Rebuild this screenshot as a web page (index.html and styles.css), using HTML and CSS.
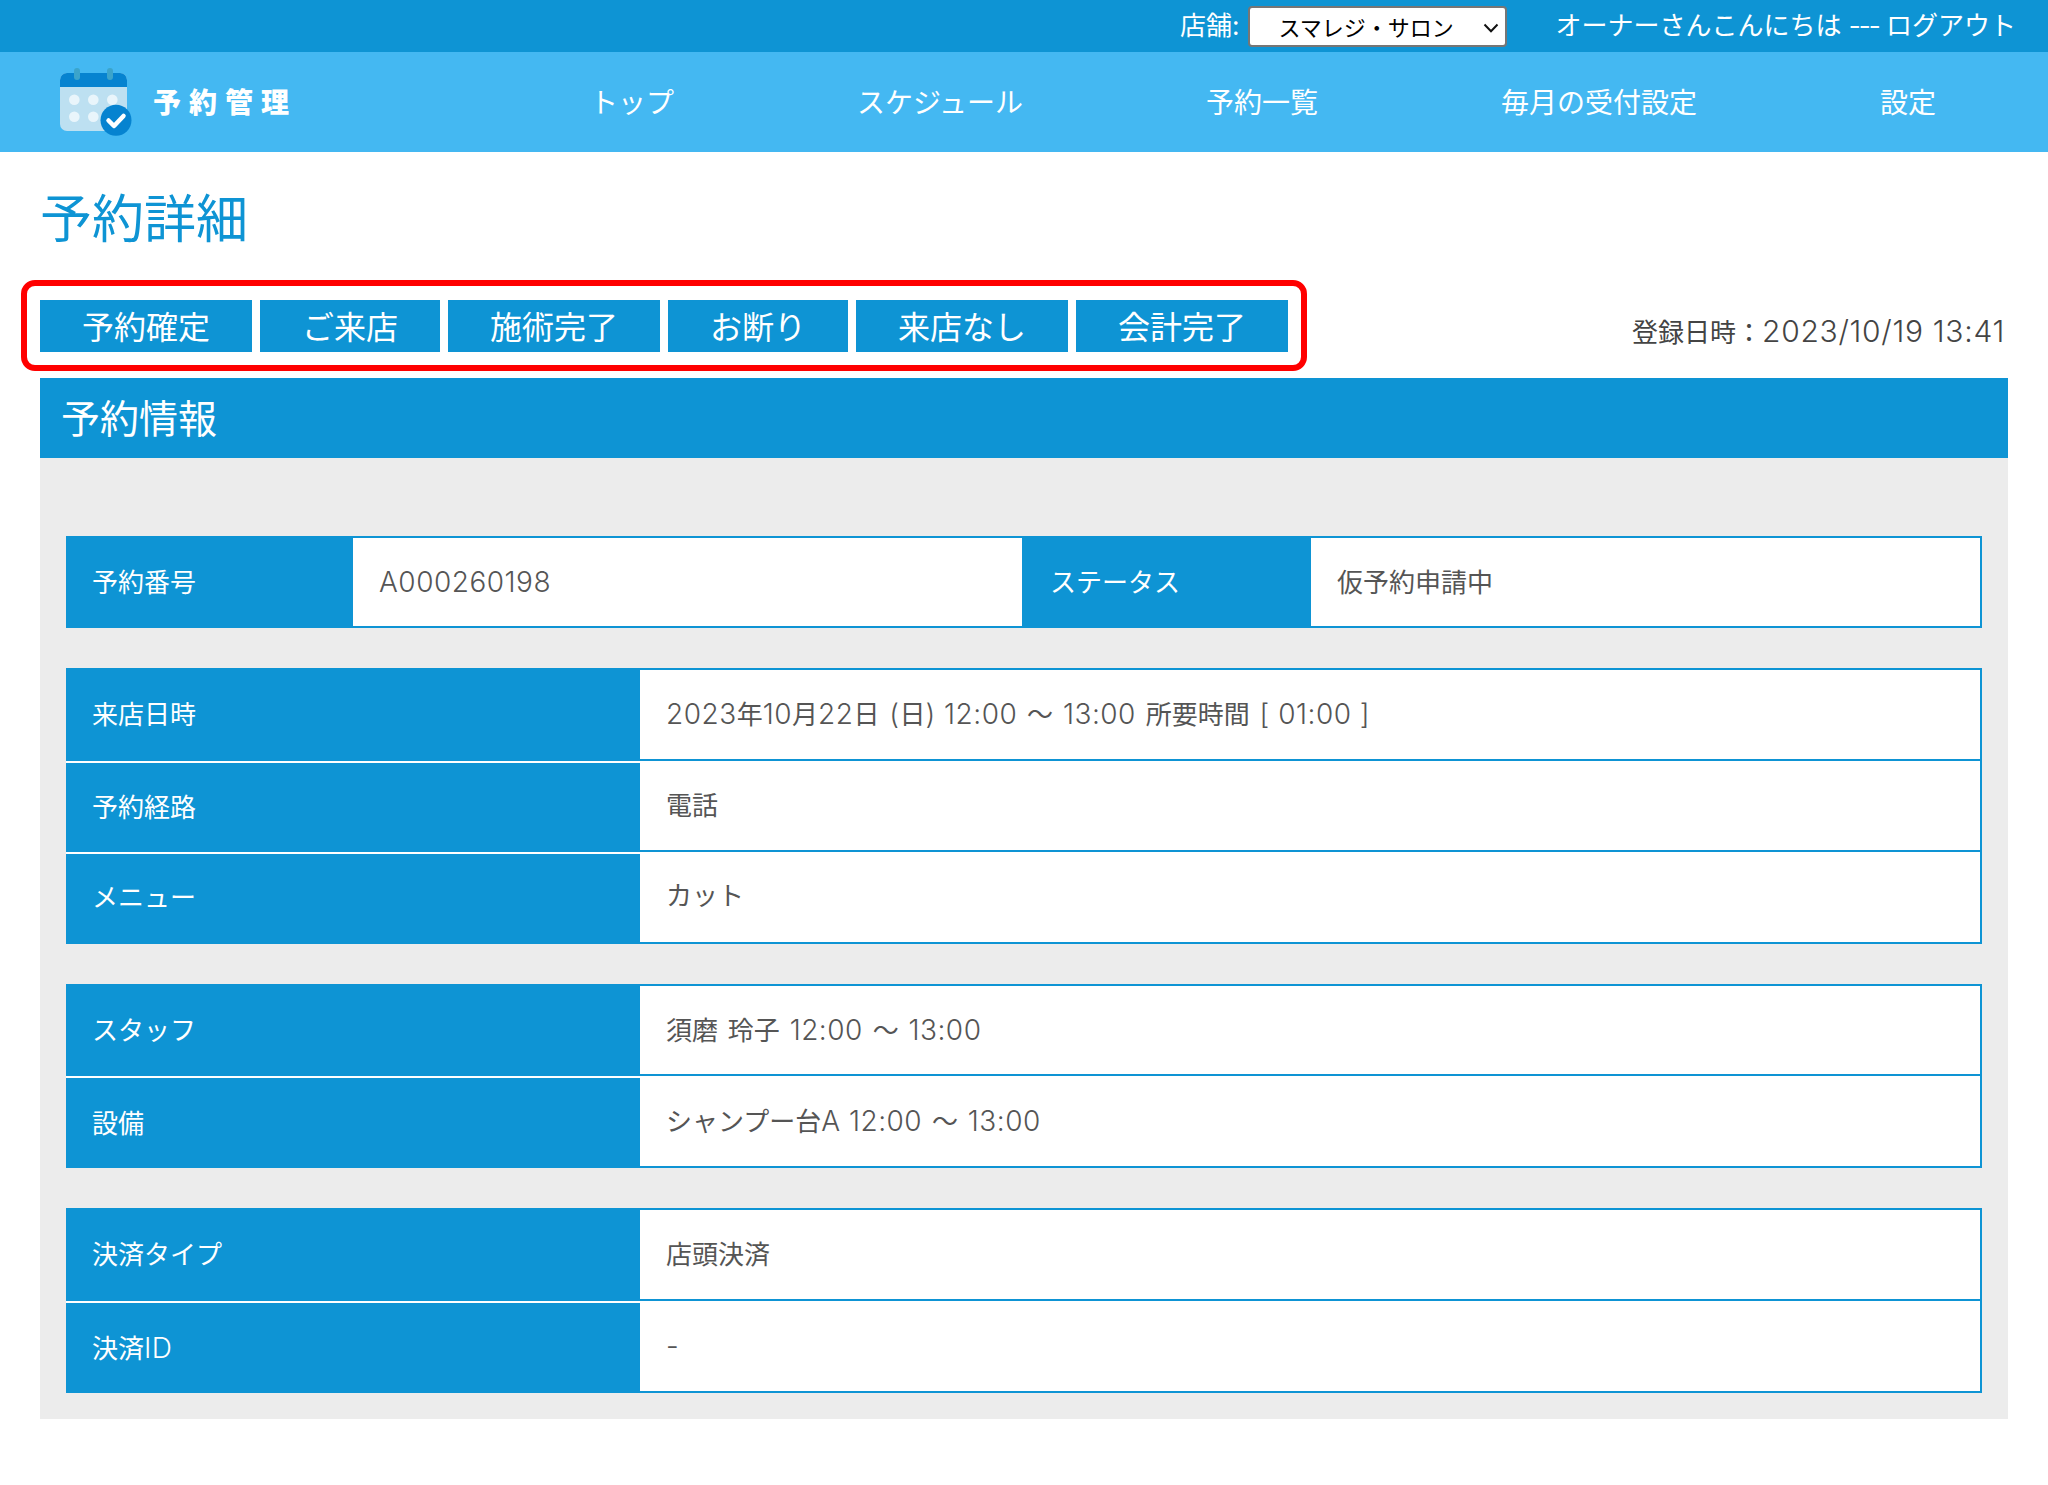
FILE: index.html
```html
<!DOCTYPE html>
<html lang="ja">
<head>
<meta charset="utf-8">
<title>予約詳細</title>
<link rel="stylesheet" href="styles.css">
</head>
<body>
<header class="topbar">
  <label class="store-label">店舗:</label>
  <div class="store-select">
    <select class="store-input"><option>スマレジ・サロン</option></select>
    <svg class="store-chevron" viewBox="0 0 16 10" width="16" height="10"><path d="M1.500 1.500 8 8.200l6.500-6.700" fill="none" stroke="#111" stroke-width="2"/></svg>
  </div>
  <span class="greeting">オーナーさんこんにちは <span class="dash">---</span> ログアウト</span>
</header>
<nav class="nav">
  <div class="logo">
    <svg class="logo-icon" viewBox="0 0 72 68" width="72" height="68">
      <rect x="0" y="5" width="67" height="58" rx="7" fill="#bde0f1"/>
      <path d="M0 19V12a7 7 0 0 1 7-7h53a7 7 0 0 1 7 7v7z" fill="#0683d0"/>
      <rect x="14" y="0" width="6" height="12" rx="3" fill="#3ba4cb"/>
      <rect x="47" y="0" width="6" height="12" rx="3" fill="#3ba4cb"/>
      <g fill="#e9f5fb">
        <circle cx="14.300" cy="31.700" r="5.300"/><circle cx="33.300" cy="31.700" r="5.300"/><circle cx="52.300" cy="31.700" r="5.300"/>
        <circle cx="14.300" cy="48.700" r="5.300"/><circle cx="33.300" cy="48.700" r="5.300"/>
      </g>
      <circle cx="56" cy="52.300" r="15.500" fill="#0683d0"/>
      <path d="M48.500 52.500l5.500 5.500 9.500-10" fill="none" stroke="#fff" stroke-width="4.500" stroke-linecap="round" stroke-linejoin="round"/>
    </svg>
    <span class="logo-text">予約管理</span>
  </div>
  <ul class="nav-list">
    <li>トップ</li>
    <li>スケジュール</li>
    <li>予約一覧</li>
    <li>毎月の受付設定</li>
    <li>設定</li>
  </ul>
</nav>
<main class="page">
  <h1 class="page-title">予約詳細</h1>
  <div class="actions">
    <div class="buttons">
      <button class="btn btn-wide">予約確定</button>
      <button class="btn">ご来店</button>
      <button class="btn btn-wide">施術完了</button>
      <button class="btn">お断り</button>
      <button class="btn btn-wide">来店なし</button>
      <button class="btn btn-wide">会計完了</button>
      <div class="highlight"></div>
    </div>
    <div class="registered">登録日時：<span class="num-large">2023/10/19 13:41</span></div>
  </div>
  <section class="panel">
    <h2 class="panel-title">予約情報</h2>
    <div class="panel-body">
      <table class="info four">
        <tr><th>予約番号</th><td class="solo"><span class="num">A000260198</span></td><th>ステータス</th><td>仮予約申請中</td></tr>
      </table>
      <table class="info two">
        <tr class="row-tall"><th>来店日時</th><td><span class="num">2023</span>年<span class="num">10</span>月<span class="num">22</span>日 <span class="num">(</span>日<span class="num">) 12:00</span> 〜 <span class="num">13:00</span> 所要時間 <span class="num">[ 01:00 ]</span></td></tr>
        <tr class="row-short"><th>予約経路</th><td>電話</td></tr>
        <tr class="row-lift"><th>メニュー</th><td>カット</td></tr>
      </table>
      <table class="info two">
        <tr><th>スタッフ</th><td>須磨 玲子 <span class="num">12:00</span> 〜 <span class="num">13:00</span></td></tr>
        <tr><th>設備</th><td>シャンプー台<span class="num">A 12:00</span> 〜 <span class="num">13:00</span></td></tr>
      </table>
      <table class="info two">
        <tr class="row-tall"><th>決済タイプ</th><td>店頭決済</td></tr>
        <tr><th>決済<span class="num">ID</span></th><td class="solo"><span class="num">-</span></td></tr>
      </table>
    </div>
  </section>
</main>
</body>
</html>
```

FILE: styles.css
```css
* { box-sizing: border-box; }
html, body { margin: 0; padding: 0; }
body {
  background: #fff;
  color: #555;
  font-family: Inter, "Noto Sans CJK JP", sans-serif;
  font-size: 26px;
  height: 1485px;
  overflow: hidden;
}
.num { font-size: 28px; font-weight: 300; letter-spacing: 0.5px; word-spacing: 0; }
.num-large { font-size: 30px; font-weight: 300; letter-spacing: 0.7px; }
.topbar {
  height: 52px;
  background: #0e94d4;
  color: #fff;
  display: flex;
  align-items: center;
  justify-content: flex-end;
  padding-right: 32px;
}
.store-label { margin-right: 9px; margin-bottom: 5px; }
.store-select { position: relative; width: 259px; height: 41px; margin-right: 48px; }
.store-input {
  appearance: none;
  width: 100%;
  height: 100%;
  background: #fff;
  border: 2px solid #767676;
  border-radius: 4px;
  padding: 0 0 0 28px;
  font-family: "Noto Sans CJK JP", sans-serif;
  font-size: 22px;
  color: #000;
}
.store-chevron { position: absolute; right: 8px; top: 17px; }
.greeting { margin-bottom: 5px; }
.dash { letter-spacing: -2px; }
.nav {
  height: 100px;
  background: #44b8f2;
  color: #fff;
  display: flex;
  align-items: center;
  padding: 0 112px 0 60px;
}
.logo { display: flex; align-items: center; }
.logo-icon { display: block; }
.logo-text {
  margin-left: 21px;
  margin-bottom: 2px;
  font-size: 28px;
  font-weight: 900;
  letter-spacing: 8px;
}
.nav-list {
  display: flex;
  gap: 183px;
  list-style: none;
  margin: 0 0 2px auto;
  padding: 0;
  font-size: 28px;
}
.page { padding: 0 40px; }
.page-title {
  margin: 0;
  padding-top: 32px;
  height: 148px;
  color: #0e94d4;
  font-size: 52px;
  font-weight: 400;
  line-height: 72px;
}
.actions { display: flex; justify-content: space-between; align-items: flex-start; }
.buttons { position: relative; display: flex; gap: 8px; }
.btn {
  width: 180px;
  height: 52px;
  border: 0;
  padding: 0 0 2px;
  background: #0e94d4;
  color: #fff;
  font-family: "Noto Sans CJK JP", sans-serif;
  font-size: 32px;
  line-height: 50px;
}
.btn-wide { width: 212px; }
.highlight {
  position: absolute;
  left: -19px;
  top: -20px;
  width: 1286px;
  height: 91px;
  border: 6px solid #f00;
  border-radius: 14px;
  pointer-events: none;
}
.registered { margin-top: 13px; padding-right: 3px; color: #444; line-height: 36px; }
.panel { margin-top: 26px; background: #ececec; }
.panel-title {
  margin: 0;
  height: 80px;
  padding: 1px 0 0 21px;
  background: #0e94d4;
  color: #fff;
  font-size: 39px;
  font-weight: 400;
  line-height: 80px;
}
.panel-body { padding: 78px 26px 26px; display: flex; flex-direction: column; gap: 40px; }
.info {
  width: 100%;
  table-layout: fixed;
  border-collapse: separate;
  border-spacing: 0;
  background: #fff;
}
.info th, .info td { height: 92px; padding: 0 0 4px 26px; vertical-align: middle; text-align: left; font-weight: 400; }
.info td { word-spacing: 2.5px; }
.info .row-tall th, .info .row-tall td { height: 93px; }
.info .row-short th, .info .row-short td { height: 91px; }
.info .row-lift th, .info .row-lift td { padding-bottom: 7px; }
.info .solo { padding-bottom: 0; }
.info th { background: #0e94d4; color: #fff; }
.info td { border-bottom: 2px solid #0e94d4; }
.info td:last-child { border-right: 2px solid #0e94d4; }
.info tr:first-child td { border-top: 2px solid #0e94d4; }
.info tr + tr th { border-top: 2px solid #fff; }
.two th { width: 574px; }
.four th:first-child { width: 287px; }
.four td:nth-child(2) { width: 669px; }
.four th:nth-child(3) { width: 289px; padding-left: 28px; }
```
